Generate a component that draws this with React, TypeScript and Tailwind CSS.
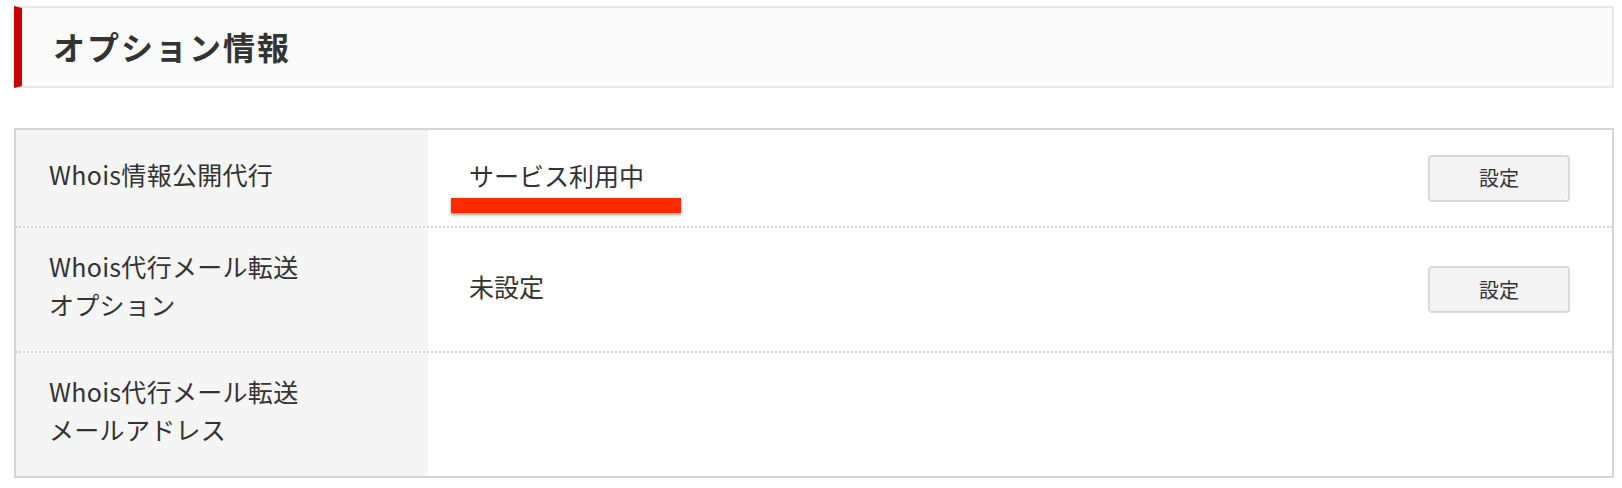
import React from 'react';

const font = { fontFamily: '"Noto Sans CJK JP", "Noto Sans", sans-serif' };

type Row = {
  label: string[];
  value?: string;
  highlight?: boolean;
  button?: boolean;
};

const rows: Row[] = [
  { label: ['Whois情報公開代行'], value: 'サービス利用中', highlight: true, button: true },
  { label: ['Whois代行メール転送', 'オプション'], value: '未設定', button: true },
  { label: ['Whois代行メール転送', 'メールアドレス'] },
];

function SettingButton() {
  return (
    <button className="w-[142px] h-[47px] rounded-[4px] border-2 border-[#d9d9d9] bg-[#f4f4f4] text-[20px] text-[#333]">
      設定
    </button>
  );
}

export default function App() {
  return (
    <div className="bg-white min-h-[488px] pl-[14px] pt-[6px]" style={font}>
      <div className="w-[1600px]">
        <div className="flex h-[82px] border-l-[8px] border-l-[#cc0000] border-y-2 border-r-2 border-[#e8e8e8] bg-[#fafafa] items-center pl-[31px] pb-[3px]">
          <h2 className="text-[32px] font-bold tracking-[2px] text-[#333]">オプション情報</h2>
        </div>

        <div className="mt-[40px] border-2 border-[#d6d6d6] text-[#333]">
          {rows.map((row, i) => (
            <div
              key={i}
              className={`flex ${i < rows.length - 1 ? 'border-b-2 border-dotted border-[#d4d4d4]' : ''}`}
            >
              <div className="w-[412px] shrink-0 bg-[#f5f5f5] flex flex-col justify-center pl-[33px] pt-[19px] pb-[28px] text-[25px] leading-[38px]">
                {row.label.map((line, j) => (
                  <div key={j} className="tracking-[0.3px]">{line}</div>
                ))}
              </div>
              <div className="relative flex-1 flex items-center pl-[41px] pb-[5px] text-[25px] min-h-[96px]">
                {row.value}
                {row.highlight && (
                  <div className="absolute left-[23px] top-[68px] w-[230px] h-[15px] bg-[#ff2a00] shadow-[0_2px_3px_rgba(0,0,0,0.35)]" />
                )}
              </div>
              <div className="w-[184px] shrink-0 flex items-center justify-start">
                {row.button && <SettingButton />}
              </div>
            </div>
          ))}
        </div>
      </div>
    </div>
  );
}
